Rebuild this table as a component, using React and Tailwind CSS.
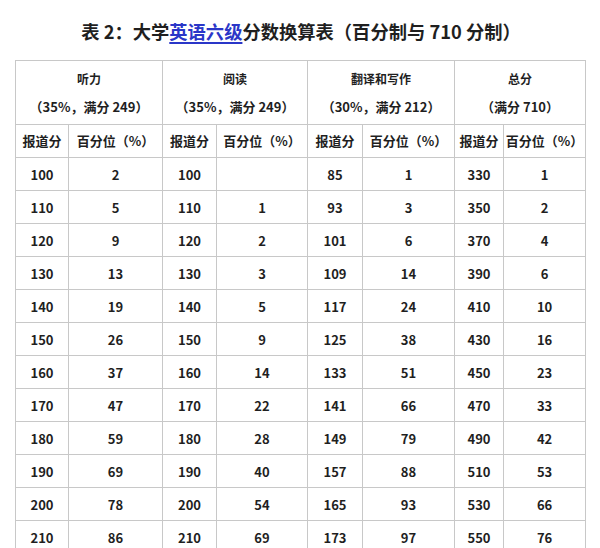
import React from "react";

const rows = [
  ["100", "2", "100", "", "85", "1", "330", "1"],
  ["110", "5", "110", "1", "93", "3", "350", "2"],
  ["120", "9", "120", "2", "101", "6", "370", "4"],
  ["130", "13", "130", "3", "109", "14", "390", "6"],
  ["140", "19", "140", "5", "117", "24", "410", "10"],
  ["150", "26", "150", "9", "125", "38", "430", "16"],
  ["160", "37", "160", "14", "133", "51", "450", "23"],
  ["170", "47", "170", "22", "141", "66", "470", "33"],
  ["180", "59", "180", "28", "149", "79", "490", "42"],
  ["190", "69", "190", "40", "157", "88", "510", "53"],
  ["200", "78", "200", "54", "165", "93", "530", "66"],
  ["210", "86", "210", "69", "173", "97", "550", "76"],
];

const groups = [
  ["听力", "（35%，满分 249）"],
  ["阅读", "（35%，满分 249）"],
  ["翻译和写作", "（30%，满分 212）"],
  ["总分", "（满分 710）"],
];

const widths = ["w-[53px]", "w-[94px]", "w-[54px]", "w-[91px]", "w-[55px]", "w-[92px]", "w-[49px]", "w-[82px]"];

export default function App() {
  return (
    <div
      className="w-[600px] h-[548px] overflow-hidden bg-white text-[#1f1f1f]"
      style={{ fontFamily: '"Noto Sans CJK SC", "Noto Sans", sans-serif' }}
    >
      <h1 className="pt-[17px] h-[60px] text-center text-[18.3px] font-bold leading-[28px] pl-[2px]">
        表 2：大学<span className="text-[#2a36c8] underline decoration-2 underline-offset-[3px]">英语六级</span>分数换算表（百分制与 710 分制）
      </h1>
      <table className="ml-[15px] w-[571px] table-fixed border-collapse text-[13px] font-bold text-center">
        <colgroup>
          {widths.map((w, i) => (
            <col key={i} className={w} />
          ))}
        </colgroup>
        <thead>
          <tr>
            {groups.map(([a, b], i) => (
              <th key={i} colSpan={2} className="h-[64px] border border-[#c8c8c8] p-0 font-bold">
                <div className="flex flex-col items-center gap-[8px] leading-[20px] pt-[1px]">
                  <span className="text-[12px]">{a}</span>
                  <span className="text-[13px] font-semibold">{b}</span>
                </div>
              </th>
            ))}
          </tr>
          <tr>
            {groups.map((_, i) => (
              <React.Fragment key={i}>
                <th className="h-[33px] border border-[#c8c8c8] p-0 font-bold text-[13px]">报道分</th>
                <th className="h-[33px] border border-[#c8c8c8] p-0 font-semibold text-[13px]">百分位（%）</th>
              </React.Fragment>
            ))}
          </tr>
        </thead>
        <tbody>
          {rows.map((r, ri) => (
            <tr key={ri}>
              {r.map((c, ci) => (
                <td key={ci} className="h-[33px] border border-[#c8c8c8] p-0 text-[13px] font-bold leading-none">
                  {c}
                </td>
              ))}
            </tr>
          ))}
        </tbody>
      </table>
    </div>
  );
}
